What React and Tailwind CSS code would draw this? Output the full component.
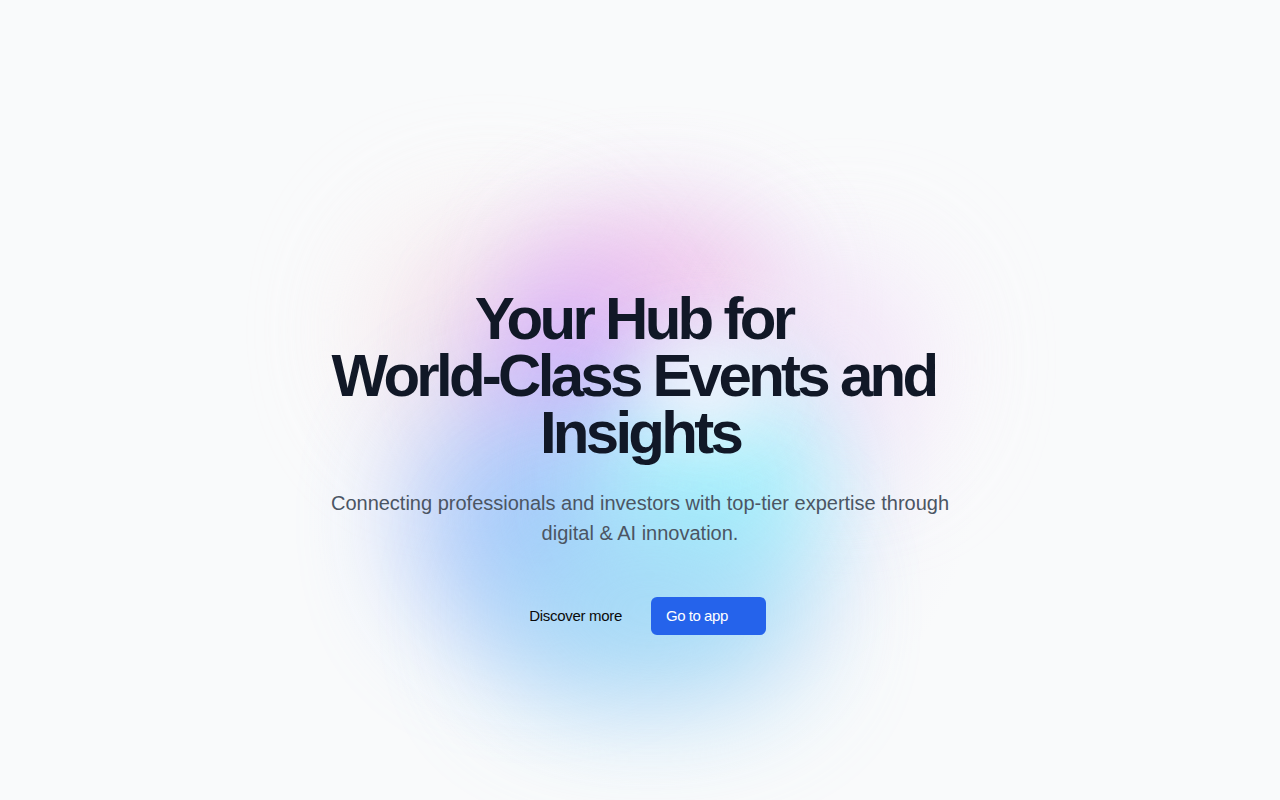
export default function App() {
  return (
    <div className="relative min-h-screen w-full overflow-hidden bg-[#f9fafb]">
      {/* decorative aurora glow behind the hero */}
      <div className="pointer-events-none absolute inset-0">
        <div className="absolute left-[300px] top-[110px] h-[680px] w-[680px] rounded-full bg-[radial-gradient(circle,rgba(230,225,250,0.9)_0%,rgba(236,232,248,0.6)_45%,rgba(244,244,250,0.3)_62%,rgba(249,250,251,0)_71%)]" />
        <div className="absolute left-[370px] top-[220px] h-[220px] w-[240px] rounded-full bg-[#f7e3e6] opacity-70 blur-[60px]" />
        <div className="absolute left-[530px] top-[215px] h-[170px] w-[250px] rounded-full bg-[#f2c4ea] opacity-85 blur-[50px]" />
        <div className="absolute left-[760px] top-[260px] h-[200px] w-[170px] rounded-full bg-[#f3e0f7] opacity-70 blur-[60px]" />
        <div className="absolute left-[480px] top-[270px] h-[190px] w-[180px] rounded-full bg-[#d6b0fa] opacity-90 blur-[50px]" />
        <div className="absolute left-[420px] top-[400px] h-[240px] w-[240px] rounded-full bg-[#9ec4fb] opacity-90 blur-[60px]" />
        <div className="absolute left-[595px] top-[370px] h-[230px] w-[230px] rounded-full bg-[#a5f3fc] opacity-95 blur-[50px]" />
        <div className="absolute left-[500px] top-[520px] h-[180px] w-[300px] rounded-full bg-[#9ad8f6] opacity-80 blur-[60px]" />
        <div className="absolute left-[640px] top-[330px] h-[110px] w-[130px] rounded-full bg-[#f4f4fd] opacity-90 blur-[35px]" />
      </div>

      <main className="relative flex flex-col items-center pt-[290px] text-center">
        <h1 className="font-['Liberation_Sans',Arial,sans-serif] text-[60px] font-bold leading-[57px] tracking-[-0.062em] text-[#111827]">
          {"Your Hub for\u00a0"}
          <br />
          {"World-Class Events and\u00a0"}
          <br />
          Insights
        </h1>
        <p className="mt-[27px] max-w-2xl font-['Liberation_Sans',Arial,sans-serif] text-[20px] leading-[30px] text-[#4b5563]">
          Connecting professionals and investors with top-tier expertise through digital &amp; AI innovation.
        </p>
        <div className="mt-[49px] flex items-center gap-[14px] font-['Liberation_Sans',Arial,sans-serif]">
          <button className="h-[38px] rounded-md px-[15px] text-[15px] font-medium tracking-[-0.02em] text-[#0a0a0a]">
            Discover more
          </button>
          <button className="h-[38px] rounded-md bg-[#2563eb] pl-[15px] pr-[38px] text-[15px] font-medium tracking-[-0.03em] text-white">
            Go to app
          </button>
        </div>
      </main>
    </div>
  );
}
